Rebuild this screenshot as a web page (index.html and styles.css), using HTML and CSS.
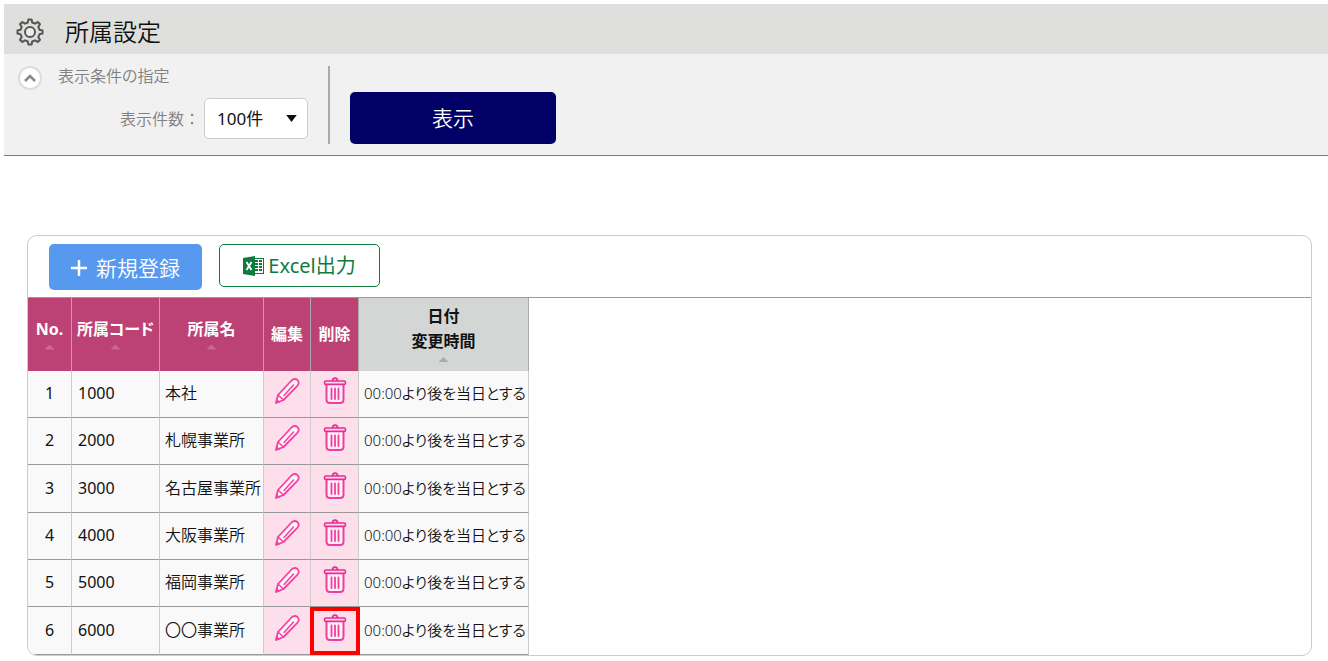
FILE: index.html
```
<!DOCTYPE html>
<html lang="ja">
<head>
    <meta charset="UTF-8">
    <meta name="viewport" content="width=device-width, initial-scale=1.0">
    <title>所属設定</title>
    <link rel="stylesheet" href="styles.css">
</head>
<body>
    <!-- shared icons -->
    <svg class="sprite" aria-hidden="true">
        <symbol id="pencil" viewBox="0 0 26 28">
            <path d="M2 26 L4 18 L17.500 3.500 Q20.500 .8 23.500 3 Q26 5.800 23.300 8.800 L9.500 23 Z" fill="#fff6fb" stroke="#f53fa1" stroke-width="1.800" stroke-linejoin="round"/>
            <path d="M4 18 L9.500 23 M10 18.500 L19.500 8" fill="none" stroke="#f53fa1" stroke-width="1.500" stroke-linecap="round"/>
            <path d="M2 26 L2.800 22.500 L5.500 25 Z" fill="#f53fa1" stroke="#f53fa1"/>
        </symbol>
        <symbol id="trash" viewBox="0 0 24 28">
            <path d="M3.500 7 V22.500 Q3.500 26 7 26 H17 Q20.500 26 20.500 22.500 V7" fill="#fff0f8" stroke="#ee3f9f" stroke-width="2"/>
            <path d="M9.500 4 Q9.500 1.200 12 1.200 T14.500 4" fill="none" stroke="#e62f92" stroke-width="1.800"/>
            <rect x="1.500" y="4" width="21" height="3.400" rx="1.400" fill="#fcd7ea" stroke="#e62f92" stroke-width="1.600"/>
            <path d="M8.500 11.500 V22 M12 11.500 V22 M15.500 11.500 V22" stroke="#ee3f9f" stroke-width="1.800" stroke-linecap="round"/>
        </symbol>
    </svg>

    <header class="page-title">
        <svg class="gear" viewBox="0 0 28 28" fill="none" stroke="#555" stroke-width="2" stroke-linejoin="round">
            <path d="M11.800 4.500 L12.400 1.500 H15.600 L16.200 4.500 L19.100 5.700 L21.700 4 L24 6.300 L22.300 8.900 L23.500 11.800 L26.500 12.400 V15.600 L23.500 16.200 L22.300 19.100 L24 21.700 L21.700 24 L19.100 22.300 L16.200 23.500 L15.600 26.500 H12.400 L11.800 23.500 L8.900 22.300 L6.300 24 L4 21.700 L5.700 19.100 L4.500 16.200 L1.500 15.600 V12.400 L4.500 11.800 L5.700 8.900 L4 6.300 L6.300 4 L8.900 5.700 Z"/>
            <circle cx="14" cy="14" r="5" fill="#ececea"/>
        </svg>
        <h1>所属設定</h1>
    </header>

    <form class="search">
        <div class="condition">
            <div class="condition-head">
                <button type="button" class="toggle" aria-label="閉じる">
                    <svg viewBox="0 0 12 8"><path d="M1 7 L6 2 L11 7" fill="none" stroke="#888" stroke-width="2.500"/></svg>
                </button>
                <span>表示条件の指定</span>
            </div>
            <div class="condition-row">
                <label for="count">表示件数：</label>
                <div class="select-wrap">
                    <select id="count">
                        <option>100件</option>
                    </select>
                    <svg class="arrow" viewBox="0 0 12 8"><path d="M0 0 H12 L6 8 Z" fill="#0b0f14"/></svg>
                </div>
            </div>
        </div>
        <button type="button" class="show">表示</button>
    </form>

    <main class="panel">
        <div class="tools">
            <button type="button" class="new">
                <svg viewBox="0 0 16 16"><path d="M8 0 V16 M0 8 H16" stroke="#fff" stroke-width="2.500"/></svg>
                新規登録
            </button>
            <button type="button" class="excel">
                <svg viewBox="0 0 21 20">
                    <rect x="11.500" y="2.500" width="9" height="15" fill="#fff" stroke="#0f7a3e"/>
                    <path d="M12 5 H19 M12 8 H19 M12 11 H19 M12 14 H19" stroke="#0f7a3e" stroke-width="1.800" stroke-dasharray="3 1"/>
                    <path d="M0 2 L12 0 V20 L0 18 Z" fill="#0f7a3e"/>
                    <path d="M3.500 6 L8.500 14 M8.500 6 L3.500 14" stroke="#fff" stroke-width="1.800"/>
                </svg>
                Excel出力
            </button>
        </div>
        <table>
            <thead>
                <tr>
                    <th class="no">No.<i class="sort"></i></th>
                    <th class="code">所属コード<i class="sort"></i></th>
                    <th class="name">所属名<i class="sort"></i></th>
                    <th class="edit">編集</th>
                    <th class="delete">削除</th>
                    <th class="date">日付<br>変更時間<i class="sort"></i></th>
                </tr>
            </thead>
            <tbody>
                <tr>
                    <td class="num">1</td><td class="id">1000</td><td>本社</td>
                    <td class="action"><button type="button" aria-label="編集"><svg><use href="#pencil"/></svg></button></td>
                    <td class="action"><button type="button" aria-label="削除"><svg><use href="#trash"/></svg></button></td>
                    <td class="time">00:00より後を当日とする</td>
                </tr>
                <tr>
                    <td class="num">2</td><td class="id">2000</td><td>札幌事業所</td>
                    <td class="action"><button type="button" aria-label="編集"><svg><use href="#pencil"/></svg></button></td>
                    <td class="action"><button type="button" aria-label="削除"><svg><use href="#trash"/></svg></button></td>
                    <td class="time">00:00より後を当日とする</td>
                </tr>
                <tr>
                    <td class="num">3</td><td class="id">3000</td><td>名古屋事業所</td>
                    <td class="action"><button type="button" aria-label="編集"><svg><use href="#pencil"/></svg></button></td>
                    <td class="action"><button type="button" aria-label="削除"><svg><use href="#trash"/></svg></button></td>
                    <td class="time">00:00より後を当日とする</td>
                </tr>
                <tr>
                    <td class="num">4</td><td class="id">4000</td><td>大阪事業所</td>
                    <td class="action"><button type="button" aria-label="編集"><svg><use href="#pencil"/></svg></button></td>
                    <td class="action"><button type="button" aria-label="削除"><svg><use href="#trash"/></svg></button></td>
                    <td class="time">00:00より後を当日とする</td>
                </tr>
                <tr>
                    <td class="num">5</td><td class="id">5000</td><td>福岡事業所</td>
                    <td class="action"><button type="button" aria-label="編集"><svg><use href="#pencil"/></svg></button></td>
                    <td class="action"><button type="button" aria-label="削除"><svg><use href="#trash"/></svg></button></td>
                    <td class="time">00:00より後を当日とする</td>
                </tr>
                <tr>
                    <td class="num">6</td><td class="id">6000</td><td>〇〇事業所</td>
                    <td class="action"><button type="button" aria-label="編集"><svg><use href="#pencil"/></svg></button></td>
                    <td class="action marked"><button type="button" aria-label="削除"><svg><use href="#trash"/></svg></button></td>
                    <td class="time">00:00より後を当日とする</td>
                </tr>
            </tbody>
        </table>
    </main>
</body>
</html>
```
FILE: styles.css
```
*{
    box-sizing: border-box;
}
body{
    margin: 4px 0 0 4px;
    background-color: #fff;
    color: #111;
    font-family: "Noto Sans", "Noto Sans CJK JP", sans-serif;
    font-size: 16px;
    font-weight: 350;
    font-feature-settings: "palt";
    line-height: 24px;
}
button, select{
    font: inherit;
    font-feature-settings: inherit;
    cursor: pointer;
}
.sprite{
    display: none;
}

/* title bar */
.page-title{
    display: flex;
    align-items: center;
    gap: 21px;
    height: 50px;
    padding: 5px 12px 0;
    background-color: #dfdfdd;
}
.page-title h1{
    margin: 0;
    font-size: 24px;
    font-weight: 350;
    line-height: 36px;
}
.gear{
    width: 28px;
    height: 28px;
}

/* search conditions */
.search{
    display: flex;
    align-items: flex-end;
    gap: 20px;
    padding: 12px 0 11px 14px;
    background-color: #f1f1f1;
    border-bottom: 1px solid #c2557f;
}
.condition{
    width: 312px;
    height: 78px;
    padding-right: 20px;
    border-right: 2px solid #aaa;
    color: #808080;
}
.condition-head{
    display: flex;
    gap: 16px;
    height: 32px;
    line-height: 20px;
}
.toggle{
    display: flex;
    align-items: center;
    justify-content: center;
    width: 24px;
    height: 24px;
    padding: 0;
    border: 2px solid #ddd;
    border-radius: 50%;
    background-color: #fff;
}
.toggle svg{
    width: 12px;
    height: 8px;
}
.condition-row{
    display: flex;
    align-items: center;
    justify-content: flex-end;
    gap: 4px;
}
.condition-row label{
    font-feature-settings: normal;
}
.select-wrap{
    position: relative;
}
.select-wrap select{
    width: 104px;
    height: 41px;
    padding: 0 12px;
    border: 1px solid #ccc;
    border-radius: 5px;
    background-color: #fff;
    color: #111;
    font-size: 17px;
    font-weight: 400;
    appearance: none;
}
.arrow{
    position: absolute;
    top: 17px;
    right: 11px;
    width: 11px;
    height: 7px;
    pointer-events: none;
}
.show{
    width: 206px;
    height: 52px;
    border: 0;
    border-radius: 5px;
    background-color: #000066;
    color: #fff;
    font-size: 21px;
}

/* list */
.panel{
    margin: 79px 16px 0 23px;
    border: 1px solid #ccc;
    border-radius: 10px;
    overflow: hidden;
}
.tools{
    display: flex;
    align-items: flex-start;
    gap: 17px;
    height: 62px;
    padding: 8px 21px;
    border-bottom: 1px solid #999;
}
.tools button{
    display: flex;
    align-items: center;
    justify-content: center;
    border-radius: 5px;
    font-size: 21px;
}
.new{
    gap: 9px;
    width: 153px;
    height: 46px;
    padding-top: 3px;
    border: 0;
    background-color: #5899f0;
    color: #fff;
}
.new svg{
    width: 16px;
    height: 16px;
}
.tools .excel{
    gap: 4px;
    width: 161px;
    height: 43px;
    border: 1px solid #0f7a3e;
    background-color: #fff;
    color: #0f7a3e;
    font-size: 20px;
    font-weight: 400;
}
.excel svg{
    width: 21px;
    height: 20px;
}
table{
    table-layout: fixed;
    width: 501px;
    border-collapse: separate;
    border-spacing: 0;
}
th{
    height: 73px;
    padding: 0;
    border-right: 1px solid #aaa;
    background-color: #bc4275;
    color: #fff;
    font-weight: 700;
    line-height: 25px;
    white-space: nowrap;
}
.no{
    width: 44px;
}
.code{
    width: 88px;
}
.name{
    width: 104px;
}
.edit{
    width: 47px;
}
.delete{
    width: 48px;
}
.date{
    background-color: #d3d6d5;
    color: #111;
}
.sort{
    display: block;
    width: 10px;
    height: 5px;
    margin: 3px auto;
    background-color: #cd6893;
    clip-path: polygon(50% 0, 100% 100%, 0 100%);
}
.date .sort{
    background-color: #aaadb0;
}
td{
    height: 47px;
    padding: 0 0 2px 5px;
    border-right: 1px solid #ccc;
    border-bottom: 1px solid #999;
    background-color: #f9f9f9;
    white-space: nowrap;
}
tr:nth-child(3n) td{
    height: 48px;
}
td.num{
    padding: 0 0 2px;
    font-weight: 400;
    text-align: center;
}
td.id{
    padding-left: 6px;
    font-weight: 400;
}
td.time{
    font-size: 15px;
}
td.action{
    position: relative;
    padding: 0 0 6px;
    background-color: #fddfeb;
    text-align: center;
}
.action button{
    display: block;
    margin: 0 auto;
    padding: 0;
    border: 0;
    background: none;
}
.action svg{
    display: block;
    width: 26px;
    height: 28px;
}
.marked::after{
    content: "";
    position: absolute;
    inset: 0 -2px -1px -1px;
    border: 4px solid #f00;
    pointer-events: none;
}
```
